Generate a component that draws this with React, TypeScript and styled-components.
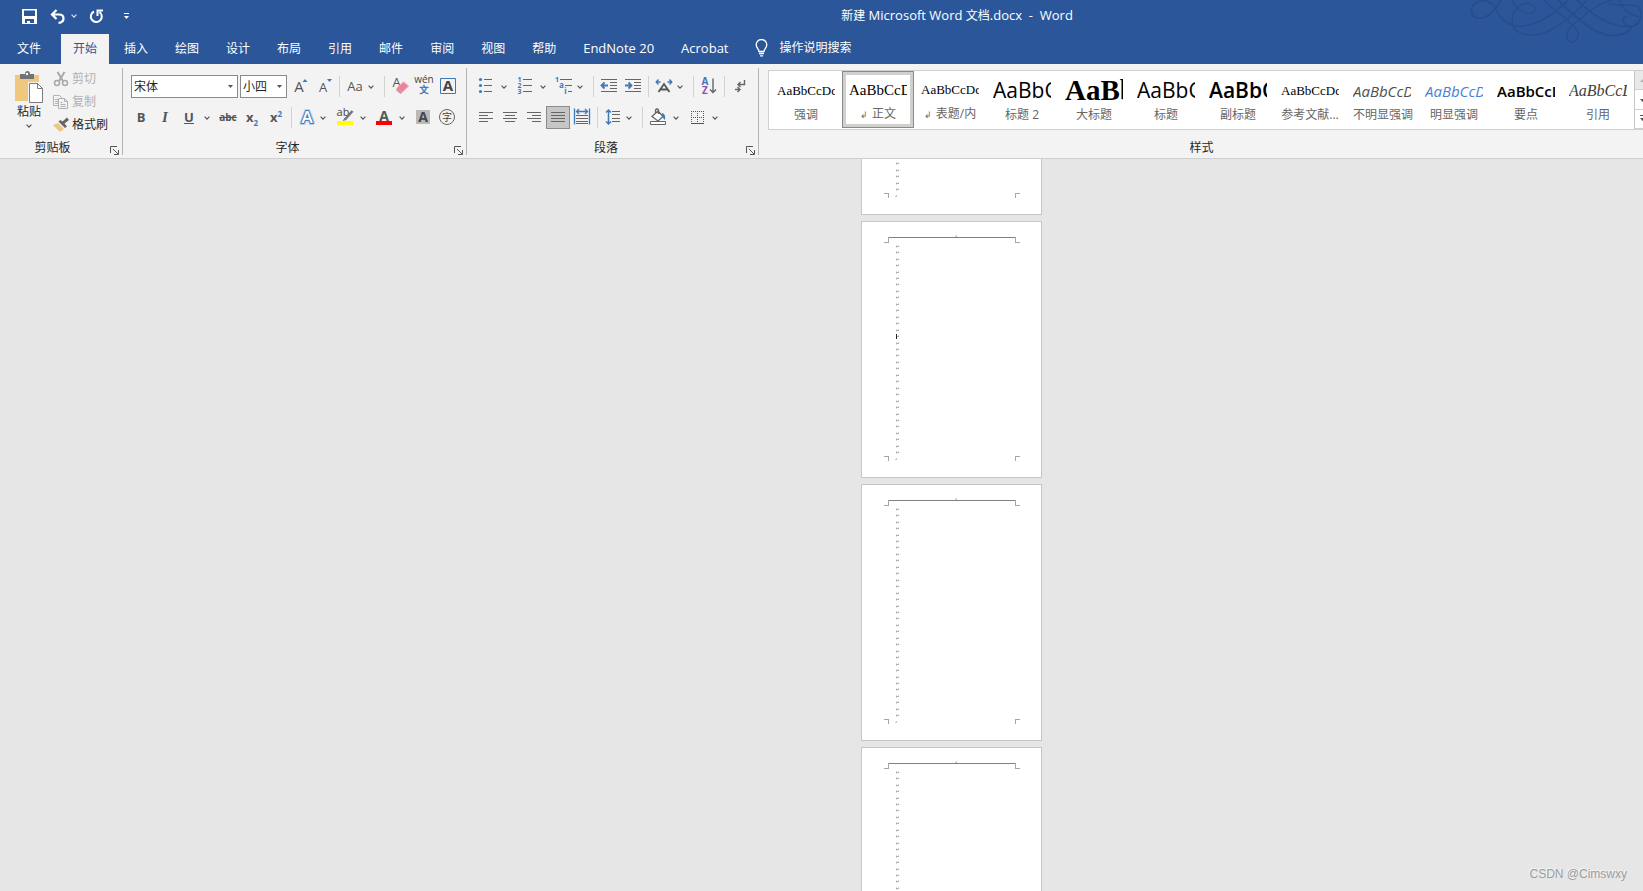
import React from "react";
import styled, { createGlobalStyle, css } from "styled-components";

const ui = `"Open Sans", "Noto Sans CJK SC", sans-serif`;
const blue = "#2b579a";
const accent = "#3f7ab8";
const ink = "#666666";

const GlobalStyle = createGlobalStyle`
  * { box-sizing: border-box; }
  body { margin: 0; background: #e6e6e6; font: 12px/16px ${ui}; color: #262626; overflow: hidden; }
  button { font: inherit; color: inherit; background: none; border: 0; padding: 0; }
  select { font: inherit; }
`;

const Window = styled.div`
  display: flex;
  flex-direction: column;
  height: 100vh;
  overflow: hidden;
  position: relative;
`;

/* ---------- title bar and tabs ---------- */

const Header = styled.header`
  position: relative;
  background: ${blue};
  color: #ffffff;
`;

const TitleBar = styled.div`
  display: grid;
  grid-template-columns: 51.2% auto;
  align-items: center;
  height: 34px;
  padding-bottom: 2px;
`;

const QuickAccess = styled.div`
  display: flex;
  align-items: center;
  padding-left: 20px;
`;

const QuickButton = styled.button<{ $w: number; $before?: number }>`
  display: flex;
  align-items: center;
  justify-content: center;
  width: ${(p) => p.$w}px;
  height: 24px;
  margin-left: ${(p) => p.$before ?? 0}px;
`;

const Title = styled.h1`
  margin: 0;
  padding-bottom: 1px;
  font-size: 13px;
  line-height: 18px;
  font-weight: 400;
  white-space: pre;
`;

const Cjk = styled.span`
  font-size: 12px;
`;

const Ornament = styled.svg`
  position: absolute;
  top: 0;
  right: 0;
  pointer-events: none;
`;

const TabBar = styled.nav`
  display: flex;
  gap: 3px;
  height: 30px;
  padding-left: 5px;
`;

const Tab = styled.button<{ $active?: boolean; $latin?: boolean; $file?: boolean }>`
  padding: 0 12px ${(p) => (p.$latin ? 2 : 0)}px;
  margin-right: ${(p) => (p.$file ? 5 : 0)}px;
  white-space: nowrap;
  font-size: ${(p) => (p.$latin ? 13 : 12)}px;
  line-height: 28px;
  ${(p) => p.$active && css`background: #f3f3f3; color: ${blue};`}
`;

const Tell = styled.button`
  display: flex;
  align-items: center;
  gap: 12px;
  margin-left: 11px;
  padding-bottom: 2px;
  white-space: nowrap;
`;

/* ---------- ribbon ---------- */

const Ribbon = styled.section`
  display: flex;
  padding: 4px 0 3px;
  background: #f3f3f3;
  border-bottom: 1px solid #cfcfcf;
`;

const Group = styled.section<{ $pad: string; $grow?: boolean }>`
  position: relative;
  display: flex;
  flex-direction: column;
  flex: ${(p) => (p.$grow ? "1 1 0" : "none")};
  min-width: 0;
  height: 87px;
  padding: ${(p) => p.$pad};
  border-right: ${(p) => (p.$grow ? "0" : "1px solid #b5b5b5")};
`;

const GroupLabel = styled.h2<{ $right?: number }>`
  margin: auto 0 0;
  padding-right: ${(p) => p.$right ?? 14}px;
  font-size: 12px;
  line-height: 14px;
  font-weight: 400;
  text-align: center;
`;

const Launcher = styled.button`
  position: absolute;
  right: 3px;
  bottom: 0;
  width: 9px;
  height: 9px;
  display: flex;
`;

const Row = styled.div`
  display: flex;
  height: 23px;
  margin-bottom: 8px;
`;

const Cell = styled.button<{ $w?: number; $pressed?: boolean }>`
  display: flex;
  align-items: center;
  justify-content: center;
  width: ${(p) => p.$w ?? 24}px;
  height: 23px;
  color: #555555;
  ${(p) => p.$pressed && css`
    background: #c6c6c6;
    box-shadow: inset 0 0 0 1px #8c8c8c;
  `}
`;

const Split = styled.span<{ $narrow?: boolean }>`
  display: flex;
  margin: ${(p) => (p.$narrow ? "0 4px 0 2px" : "0 3px 0 0")};
`;

const Sep = styled.span`
  width: 1px;
  height: 21px;
  margin: 1px 3px 0;
  background: #d2d2d2;
`;

const Combo = styled.span<{ $w: number }>`
  position: relative;
  width: ${(p) => p.$w}px;
  margin-left: 2px;
  margin-right: ${(p) => (p.$w < 60 ? 1 : 0)}px;
  select {
    appearance: none;
    width: 100%;
    height: 23px;
    padding: 0 0 0 2px;
    border: 1px solid #8a8a8a;
    border-radius: 0;
    background: #ffffff;
    color: #262626;
  }
  svg {
    position: absolute;
    right: 4px;
    top: 7px;
    pointer-events: none;
  }
`;

const Glyph = styled.span<{ $size?: number; $bold?: boolean; $italic?: boolean; $line?: string }>`
  padding-bottom: 2px;
  font-size: ${(p) => p.$size ?? 13}px;
  line-height: 20px;
  font-weight: ${(p) => (p.$bold ? 700 : 400)};
  ${(p) => p.$italic && css`font-family: "Liberation Serif", serif; font-style: italic;`}
  text-decoration: ${(p) => p.$line ?? "none"};
  sub, sup { font-size: 8px; line-height: 0; color: ${accent}; }
`;

const Clipboard = styled.div`
  display: flex;
`;

const Paste = styled.button`
  display: flex;
  flex-direction: column;
  align-items: center;
  width: 36px;
  padding-top: 3px;
  gap: 1px;
  > span { margin-bottom: 3px; }
`;

const ClipList = styled.div`
  display: flex;
  flex-direction: column;
  gap: 2px;
  margin-left: 6px;
`;

const ClipButton = styled.button`
  display: flex;
  align-items: center;
  gap: 3px;
  height: 21px;
  white-space: nowrap;
  &:disabled { color: #b1b1b1; }
`;

/* ---------- style gallery ---------- */

const Gallery = styled.div`
  display: flex;
  height: 60px;
  overflow: hidden;
  background: #ffffff;
  border: 1px solid #d0d0d0;
  border-right: 0;
  padding-left: 1px;
`;

const StyleItem = styled.button<{ $selected?: boolean }>`
  flex: none;
  width: 72px;
  height: 57px;
  padding: 0 7px 4px;
  color: #666666;
  text-align: center;
  ${(p) => p.$selected && css`
    box-shadow: inset 0 0 0 1px #8a8a86, inset 0 0 0 4px #d0d0cd;
  `}
`;

const Sample = styled.span<{ $face: "serif" | "sans"; $size: number; $bold?: boolean; $italic?: boolean; $color?: string }>`
  display: block;
  width: 58px;
  height: 34px;
  padding-top: 3px;
  overflow: hidden;
  white-space: nowrap;
  text-align: left;
  font-family: ${(p) => (p.$face === "serif" ? `"Liberation Serif", serif` : `"Open Sans", sans-serif`)};
  font-size: ${(p) => p.$size}px;
  line-height: ${(p) => (p.$size > 18 ? 30 : 32)}px;
  font-weight: ${(p) => (p.$bold ? (p.$face === "serif" ? 700 : 600) : 400)};
  font-style: ${(p) => (p.$italic ? "italic" : "normal")};
  color: ${(p) => p.$color ?? "#000000"};
`;

const StyleName = styled.span`
  display: block;
  line-height: 18px;
  white-space: nowrap;
  small { font-size: 9px; margin-right: 4px; }
`;

const GalleryScroll = styled.div`
  display: flex;
  flex: 1 0 17px;
  flex-direction: column;
  border-left: 1px solid #c6c6c6;
  button {
    flex: 1;
    padding-left: 4px;
    display: flex;
    align-items: center;
    border-bottom: 1px solid #d0d0d0;
  }
  button:disabled { background: #e8e8e8; }
`;

/* ---------- document ---------- */

const Canvas = styled.main`
  flex: 1;
  min-height: 0;
  overflow: hidden;
  display: flex;
  flex-direction: column;
  align-items: flex-start;
  gap: 6px;
  padding-left: 52.4%;
`;

const ScrolledPage = styled.div`
  flex: none;
  display: flex;
  flex-direction: column;
  justify-content: flex-end;
  height: 56px;
  overflow: hidden;
`;

const Sheet = styled.article`
  flex: none;
  width: 181px;
  height: 257px;
  padding: 15px 21px 0 22px;
  background: #ffffff;
  border: 1px solid #c6c6c6;
`;

const Margin = styled.div`
  display: flex;
  justify-content: space-between;
`;

const Corner = styled.span<{ $top?: boolean; $right?: boolean }>`
  width: 5px;
  height: ${(p) => (p.$top ? 6 : 5)}px;
  border: 0 solid #a6a6a6;
  border-top-width: ${(p) => (p.$top ? 0 : 1)}px;
  border-bottom-width: ${(p) => (p.$top ? 1 : 0)}px;
  border-left-width: ${(p) => (p.$right ? 1 : 0)}px;
  border-right-width: ${(p) => (p.$right ? 0 : 1)}px;
`;

const HeadRule = styled.span`
  flex: 1;
  display: flex;
  justify-content: center;
  margin-right: -1px;
  border-top: 1px solid #808080;
  svg { margin: -3px 0 0 8px; }
`;

const FootMark = styled.span`
  flex: 1;
  display: flex;
  align-items: flex-end;
  padding-left: 6px;
`;

const Body = styled.div`
  display: flex;
  flex-direction: column;
  height: 213px;
  padding-left: 12px;
`;

const Paragraph = styled.p`
  flex: 1;
  display: flex;
  align-items: center;
  min-height: 0;
  margin: 0;
`;

const Watermark = styled.div`
  position: absolute;
  right: 16px;
  bottom: 9px;
  font: 12px/16px "Liberation Sans", sans-serif;
  color: #9c9c9c;
  text-shadow: -1px -1px 0 #f6f6f6;
`;

/* ---------- icons ---------- */

const IconSvg = styled.svg`
  flex: none;
  overflow: visible;
`;

type IconProps = { children: React.ReactNode; w?: number };

const Icon = ({ children, w = 24 }: IconProps) => (
  <IconSvg width={w} height={23} viewBox={`${(24 - w) / 2} 0 ${w} 23`} fill="none" stroke={ink} aria-hidden="true">
    {children}
  </IconSvg>
);

const Chevron = ({ color = "#555555" }: { color?: string }) => (
  <svg width="6" height="4" viewBox="0 0 6 4" fill="none" stroke={color} strokeWidth="1.2" aria-hidden="true">
    <path d="M.6 .7 3 3.1 5.4 .7" />
  </svg>
);

const Triangle = ({ up, bar, color = "#555555" }: { up?: boolean; bar?: boolean; color?: string }) => (
  <svg width="7" height="7" viewBox="0 0 7 7" fill={color} aria-hidden="true">
    {bar && <path d="M1 0h5v1H1z" />}
    <path d={up ? "M1 5h5L3.500 2z" : "M1 3h5L3.500 6z"} />
  </svg>
);

const T = ({ x, y, s, fill = "#555", b, children }: { x: number; y: number; s: number; fill?: string; b?: boolean; children: string }) => (
  <text x={x} y={y} fontSize={s} fill={fill} stroke="none" fontWeight={b ? 700 : 400} textAnchor="middle">
    {children}
  </text>
);

const Drop = ({ label }: { label: string }) => (
  <Cell $w={12} aria-label={label}><Chevron /></Cell>
);

const lines = (rows: [number, number, number][]) => rows.map(([x1, x2, y]) => `M${x1} ${y}H${x2}`).join("");

const icons = {
  bullets: <Icon><g fill={accent} stroke="none"><circle cx="6.5" cy="4.500" r="1.600" /><circle cx="6.500" cy="10.500" r="1.600" /><circle cx="6.500" cy="16.500" r="1.600" /></g><path d={lines([[10, 18, 4.5], [10, 18, 10.5], [10, 18, 16.5]])} /></Icon>,
  numbers: <Icon><path d={lines([[10, 19, 4.5], [10, 19, 10.5], [10, 19, 16.5]])} /><T x={6.5} y={7} s={7} fill={accent} b>1</T><T x={6.5} y={13} s={7} fill={accent} b>2</T><T x={6.5} y={19} s={7} fill={accent} b>3</T></Icon>,
  levels: <Icon w={20}><path d={lines([[8, 20, 4.5], [13, 20, 10.5], [16, 20, 16.5]])} /><T x={5} y={7} s={7} fill={accent} b>1</T><T x={9.5} y={13} s={8} fill={accent} b>a</T><T x={13.5} y={19} s={8} fill={accent} b>i</T></Icon>,
  outdent: <Icon><path d={lines([[4, 20, 4.5], [13, 20, 7.5], [13, 20, 10.5], [13, 20, 13.5], [4, 20, 16.5]])} /><path d="M11 10.500H5M7.500 7.500l-3 3 3 3" stroke={accent} strokeWidth="1.800" /></Icon>,
  indent: <Icon><path d={lines([[4, 20, 4.5], [13, 20, 7.5], [13, 20, 10.5], [13, 20, 13.5], [4, 20, 16.5]])} /><path d="M4 10.500h6M7.500 7.500l3 3-3 3" stroke={accent} strokeWidth="1.800" /></Icon>,
  asian: <Icon w={20}><path d="M6.500 17 12 9l5.500 8M8.500 14.500h7" strokeWidth="1.800" stroke="#555" /><path d="M4.500 7h4M6.500 4.500 4.200 7l2.300 2.500M19.500 7h-4M17.500 4.500 19.800 7l-2.300 2.500" stroke={accent} strokeWidth="1.400" /></Icon>,
  sort: <Icon><T x={8} y={10} s={10} fill={accent} b>A</T><T x={8} y={19} s={10} fill="#8d52ae" b>Z</T><path d="M16 3.500v14M13 14.500l3 3 3-3" strokeWidth="1.400" /></Icon>,
  marks: <Icon><path d="M16.500 5v4.500H10M12.500 7 10 9.500l2.500 2.500M7 14.500h5M9.500 12l2.500 2.500L9.500 17" strokeWidth="1.400" /></Icon>,
  left: <Icon><path d={lines([[5, 19, 6.5], [5, 14, 9.5], [5, 19, 12.5], [5, 14, 15.5]])} /></Icon>,
  center: <Icon><path d={lines([[5, 19, 6.5], [7, 17, 9.5], [5, 19, 12.5], [7, 17, 15.5]])} /></Icon>,
  right: <Icon><path d={lines([[5, 19, 6.5], [10, 19, 9.5], [5, 19, 12.5], [10, 19, 15.5]])} /></Icon>,
  justify: <Icon w={22}><path d={lines([[5, 19, 6.5], [5, 19, 9.5], [5, 19, 12.5], [5, 19, 15.5]])} /></Icon>,
  distribute: <Icon><path d="M4.500 2.500v16M19.500 2.500v16M7 5.500h10M9 3 6.500 5.500 9 8M15 3l2.500 2.500L15 8" stroke={accent} strokeWidth="1.300" /><path d={lines([[6, 18, 9.5], [6, 18, 12.5], [6, 18, 15.5], [6, 18, 17.5]])} /></Icon>,
  spacing: <Icon w={20}><path d="M7.500 4v14M5 6.500 7.500 4 10 6.500M5 15.500 7.500 18l2.500-2.500" stroke={accent} strokeWidth="1.500" /><path d={lines([[11, 19, 5.5], [11, 19, 8.5], [11, 19, 12.5], [11, 19, 15.5]])} /></Icon>,
  shading: <Icon><path d="M6 10.500 12 5l5 5.500-5 4.500zM9.500 8V4q1.500-2 3 0v4" strokeWidth="1.300" fill="#fff" /><path d="M16 7q4 1 3 7-3-2-3-7" fill={accent} stroke="none" /><path d="M4.500 15.500h15v3h-15z" fill="#fff" /></Icon>,
  border: <Icon><path d="M6 5.500h13M6 11.500h13M6.500 5v12M12.500 5v12M18.500 5v12" strokeDasharray="1 1" stroke="#555" /><path d="M6 17.500h13" stroke="#555" /></Icon>,
  eraser: <Icon><T x={8.5} y={12} s={13}>A</T><path d="m9 13 6.500-6 5 4-6.500 6.500z" fill="#e8849c" stroke="#f0a3b5" /><path d="m9 13 5 4.500-1.500 1.500-4.500-4z" fill="#e8849c" stroke="none" /></Icon>,
  wen: <Icon><T x={12} y={8} s={10} fill="#444">wén</T><text x="12" y="18" fontSize="9" fill={accent} stroke={accent} strokeWidth=".5" textAnchor="middle">文</text></Icon>,
  boxed: <Icon><path d="M4.500 3.500h15v15h-15z" stroke={accent} /><T x={12} y={16} s={15} fill="#444" b>A</T></Icon>,
  glow: <Icon w={20}><g fontSize="17" fontWeight="600" textAnchor="middle" strokeLinejoin="round" paintOrder="stroke"><text x="12" y="17" fill="#a9c8ea" stroke="#b4d0ee" strokeWidth="4">A</text><text x="12" y="17" fill="#fff" stroke={accent} strokeWidth="2">A</text></g></Icon>,
  highlight: <Icon><T x={10} y={10} s={11} fill="#444">ab</T><path d="M19.500 5 12 13.500" strokeWidth="2.600" stroke="#777" /><path d="m11.500 12 2 2-4 1z" fill="#777" stroke="none" /><path d="M4 15h16v4H4z" fill="#ffff00" stroke="none" /></Icon>,
  color: <Icon><T x={12} y={14.5} s={14} b>A</T><path d="M4 15h16v4H4z" fill="#ff0000" stroke="none" /></Icon>,
  shaded: <Icon><path d="M5 4h14v14H5z" fill="#b9b9b9" stroke="none" /><T x={12} y={16} s={14} fill="#444" b>A</T></Icon>,
  circled: <Icon><circle cx="12" cy="11" r="7.500" /><T x={12} y={15} s={10} fill="#444">字</T></Icon>,
  grow: <Icon><T x={11} y={17} s={15}>A</T><path d="m14.500 7 2.500-3 2.500 3z" fill={accent} stroke="none" /></Icon>,
  shrink: <Icon><T x={11} y={17} s={13}>A</T><path d="m15 4 2.500 3L20 4z" fill={accent} stroke="none" /></Icon>,
};

const PasteIcon = () => (
  <svg width="30" height="32" viewBox="0 0 30 32" aria-hidden="true">
    <path d="M1 4h24v26H1z" fill="#edc87e" />
    <path d="M6 3h5q0-3 2.500-3t2.500 3h4v5H6z" fill="#737373" /><circle cx="13" cy="3" r="1.200" fill="#fff" />
    <path d="M14 11h16v21H14z" fill="#f3f3f3" />
    <path d="M15.500 12.500h8l5 5v14h-13z" fill="#fff" stroke="#7a7a7a" /><path d="M23.500 12.500v5h5" fill="none" stroke="#7a7a7a" />
  </svg>
);
const CutIcon = () => (
  <svg width="16" height="16" viewBox="0 0 16 16" fill="none" stroke="#a9a9a9" strokeWidth="1.500" aria-hidden="true">
    <path d="M4.500 1 10 10M11.500 1 6 10" strokeWidth="2" /><circle cx="4" cy="12" r="2.500" /><circle cx="12" cy="12" r="2.500" />
  </svg>
);
const CopyIcon = () => (
  <svg width="16" height="16" viewBox="0 0 16 16" fill="#f3f3f3" stroke="#b1b1b1" aria-hidden="true">
    <path d="M.500 1.500h6l2 2v8h-8zM2 5.500h4M2 7.500h3M2 9.500h3" /><path d="M5.500 4.500h6l3 3v7h-9zM11.500 4.500v3h3M7.500 8.500h2M7.500 10.500h5M7.500 12.500h5" />
  </svg>
);
const BrushIcon = () => (
  <svg width="16" height="16" viewBox="0 0 16 16" aria-hidden="true">
    <path d="m0 8 5-2 6 6-4 3z" fill="#edc87e" /><path d="m5.500 4.500 6.500 6.500 2-1.500-2.500-3L16 3l-2-2.500-4.500 4-2-1.500z" fill="#666" />
  </svg>
);

const LauncherIcon = () => (
  <svg width="9" height="9" viewBox="0 0 9 9" fill="none" stroke="#555" aria-hidden="true">
    <path d="M.500 7V.500H7M3 3l5 5M8.500 4v4.500H4" />
  </svg>
);

const EndMark = () => (
  <svg width="2" height="3" viewBox="0 0 2 3" aria-hidden="true" shapeRendering="crispEdges">
    <path d="M0 1h1V0h1v2H0z" fill="#c8c8c8" />
  </svg>
);

const ParagraphMark = ({ caret }: { caret?: boolean }) => (
  <svg width="3" height="5" viewBox="0 0 3 5" aria-hidden="true" shapeRendering="crispEdges">
    <path d="M0 1h1v3H0zM2 1h1v1H2z" fill="#dadada" />
    <path d="M0 2h3v1H0z" fill="#b0b0b0" />
    {caret && <path d="M0 0h1v5H0z" fill="#222222" />}
  </svg>
);

/* ---------- content ---------- */

const tabs = ["插入", "绘图", "设计", "布局", "引用", "邮件", "审阅", "视图", "帮助", "EndNote 20", "Acrobat"];

type StyleDef = { name: string; face: "serif" | "sans"; size: number; bold?: boolean; italic?: boolean; color?: string; selected?: boolean; linked?: boolean };

const styleDefs: StyleDef[] = [
  { name: "强调", face: "serif", size: 13 },
  { name: "正文", face: "serif", size: 15, selected: true, linked: true },
  { name: "表题/内", face: "serif", size: 13, linked: true },
  { name: "标题 2", face: "sans", size: 21 },
  { name: "大标题", face: "serif", size: 29, bold: true },
  { name: "标题", face: "sans", size: 21 },
  { name: "副标题", face: "sans", size: 21, bold: true },
  { name: "参考文献...", face: "serif", size: 13 },
  { name: "不明显强调", face: "sans", size: 15, italic: true, color: "#505050" },
  { name: "明显强调", face: "sans", size: 15, italic: true, color: "#4a7fd4" },
  { name: "要点", face: "sans", size: 15, bold: true },
  { name: "引用", face: "serif", size: 16, italic: true, color: "#404040" },
];

const Page = ({ caret }: { caret?: number }) => (
  <Sheet>
    <Margin>
      <Corner $top />
      <HeadRule><EndMark /></HeadRule>
      <Corner $top $right />
    </Margin>
    <Body>
      {Array.from({ length: 33 }, (_, i) => (
        <Paragraph key={i}><ParagraphMark caret={i === caret} /></Paragraph>
      ))}
    </Body>
    <Margin>
      <Corner />
      <FootMark><EndMark /></FootMark>
      <Corner $right />
    </Margin>
  </Sheet>
);

export default function App() {
  return (
    <Window>
      <GlobalStyle />
      <Header>
        <Ornament width="178" height="48" viewBox="0 0 534 144" fill="none" stroke="#274d8a" strokeWidth="4" aria-hidden="true">
          <path d="M108 0C98 18 88 32 72 44 52 60 26 58 20 38 16 20 28 6 48 3 70 0 84 10 92 26 104 50 124 78 160 79 220 78 270 40 310 0" strokeWidth="5" />
          <path d="M142 0C150 30 190 48 206 36 216 24 204 10 184 10 156 12 138 40 142 76 152 104 200 112 240 98 290 78 340 30 366 0" />
          <path d="M238 0C270 36 330 70 339 98 342 120 326 130 314 124 298 114 304 90 326 72 360 44 400 10 440 0" />
          <path d="M280 0C320 40 370 90 420 104 460 112 496 98 500 78" strokeWidth="6" />
          <path d="M336 0C380 46 440 84 496 80 528 72 538 40 520 22 506 10 480 20 430 12" strokeWidth="5" />
          <path d="M464 0C470 26 490 44 524 50M488 54C478 46 470 58 478 70 488 84 508 82 522 68" />
        </Ornament>
        <TitleBar>
          <QuickAccess>
            <QuickButton $w={18} aria-label="保存">
              <svg width="15" height="15" viewBox="0 0 15 15" aria-hidden="true"><path fillRule="evenodd" d="M0 0h15v15H0zM2 1.500V7h11V1.500zM3 10v4h2v-2h3v2h4v-4z" fill="#fff" /></svg>
            </QuickButton>
            <QuickButton $w={18} $before={11} aria-label="撤消">
              <svg width="16" height="15" viewBox="0 0 16 15" fill="none" stroke="#fff" strokeWidth="2.200" aria-hidden="true"><path d="M2 5.500h7q4.500 0 4.500 4t-5 4.300M6.500 1 2 5.500 6.500 10" /></svg>
            </QuickButton>
            <QuickButton $w={12} $before={1} aria-label="撤消选项"><Chevron color="#dbe4f2" /></QuickButton>
            <QuickButton $w={18} $before={7} aria-label="重复">
              <svg width="15" height="15" viewBox="0 0 15 15" fill="none" stroke="#fff" strokeWidth="2" aria-hidden="true"><path d="M5 2.500A5.500 5.500 0 1 0 10.500 3M8.500 7V1.500H14" /></svg>
            </QuickButton>
            <QuickButton $w={12} $before={15} aria-label="自定义快速访问工具栏"><Triangle bar color="#fff" /></QuickButton>
          </QuickAccess>
          <Title><Cjk>新建</Cjk> Microsoft Word <Cjk>文档</Cjk>.docx{"  -  "}Word</Title>
        </TitleBar>
        <TabBar>
          <Tab $file>文件</Tab>
          <Tab $active>开始</Tab>
          {tabs.map((t) => <Tab key={t} $latin={/^[A-Z]/.test(t)}>{t}</Tab>)}
          <Tell>
            <svg width="13" height="18" viewBox="0 0 13 18" fill="none" stroke="#fff" strokeWidth="1.300" aria-hidden="true"><path d="M4 12.500C4 10 1.200 9 1.200 5.800a5.300 5.300 0 0 1 10.600 0C11.800 9 9 10 9 12.500zM4 14.500h5M5 16.800h3" /></svg>
            操作说明搜索
          </Tell>
        </TabBar>
      </Header>

      <Ribbon>
        <Group $pad="0 14px 0 11px">
          <Clipboard>
            <Paste><PasteIcon /><span>粘贴</span><Chevron /></Paste>
            <ClipList>
              <ClipButton disabled><CutIcon />剪切</ClipButton>
              <ClipButton disabled><CopyIcon />复制</ClipButton>
              <ClipButton><BrushIcon />格式刷</ClipButton>
            </ClipList>
          </Clipboard>
          <GroupLabel>剪贴板</GroupLabel>
          <Launcher aria-label="剪贴板选项"><LauncherIcon /></Launcher>
        </Group>

        <Group $pad="7px 6px 0">
          <Row>
            <Combo $w={107}><select aria-label="字体"><option>宋体</option></select><Triangle /></Combo>
            <Combo $w={47}><select aria-label="字号"><option>小四</option></select><Triangle /></Combo>
            <Cell aria-label="增大字号">{icons.grow}</Cell>
            <Cell aria-label="减小字号">{icons.shrink}</Cell>
            <Sep />
            <Split $narrow><Cell $w={20} aria-label="更改大小写"><Glyph>Aa</Glyph></Cell><Drop label="大小写选项" /></Split>
            <Sep />
            <Cell aria-label="清除格式">{icons.eraser}</Cell>
            <Cell aria-label="拼音指南">{icons.wen}</Cell>
            <Cell aria-label="字符边框">{icons.boxed}</Cell>
          </Row>
          <Row>
            <Cell aria-label="加粗"><Glyph $bold>B</Glyph></Cell>
            <Cell aria-label="倾斜"><Glyph $size={15} $bold $italic>I</Glyph></Cell>
            <Split><Cell aria-label="下划线"><Glyph $bold $line="underline">U</Glyph></Cell><Drop label="下划线选项" /></Split>
            <Cell aria-label="删除线"><Glyph $size={10} $bold $line="line-through">abc</Glyph></Cell>
            <Cell aria-label="下标"><Glyph $bold>x<sub>2</sub></Glyph></Cell>
            <Cell aria-label="上标"><Glyph $bold>x<sup>2</sup></Glyph></Cell>
            <Sep />
            <Split $narrow><Cell $w={20} aria-label="文本效果">{icons.glow}</Cell><Drop label="文本效果选项" /></Split>
            <Split><Cell aria-label="突出显示">{icons.highlight}</Cell><Drop label="突出显示颜色" /></Split>
            <Split><Cell aria-label="字体颜色">{icons.color}</Cell><Drop label="字体颜色选项" /></Split>
            <Cell aria-label="字符底纹">{icons.shaded}</Cell>
            <Cell aria-label="带圈字符">{icons.circled}</Cell>
          </Row>
          <GroupLabel>字体</GroupLabel>
          <Launcher aria-label="字体选项"><LauncherIcon /></Launcher>
        </Group>

        <Group $pad="7px 6px 0 7px">
          <Row>
            <Split><Cell aria-label="项目符号">{icons.bullets}</Cell><Drop label="项目符号选项" /></Split>
            <Split><Cell aria-label="编号">{icons.numbers}</Cell><Drop label="编号选项" /></Split>
            <Split $narrow><Cell $w={20} aria-label="多级列表">{icons.levels}</Cell><Drop label="多级列表选项" /></Split>
            <Sep />
            <Cell aria-label="减少缩进量">{icons.outdent}</Cell>
            <Cell aria-label="增加缩进量">{icons.indent}</Cell>
            <Sep />
            <Split $narrow><Cell $w={20} aria-label="中文版式">{icons.asian}</Cell><Drop label="中文版式选项" /></Split>
            <Sep />
            <Cell aria-label="排序">{icons.sort}</Cell>
            <Sep />
            <Cell aria-label="显示编辑标记">{icons.marks}</Cell>
          </Row>
          <Row>
            <Cell aria-label="左对齐">{icons.left}</Cell>
            <Cell aria-label="居中">{icons.center}</Cell>
            <Cell aria-label="右对齐">{icons.right}</Cell>
            <Cell $pressed aria-label="两端对齐" aria-pressed="true">{icons.justify}</Cell>
            <Cell aria-label="分散对齐">{icons.distribute}</Cell>
            <Sep />
            <Split $narrow><Cell $w={20} aria-label="行距">{icons.spacing}</Cell><Drop label="行距选项" /></Split>
            <Sep />
            <Split><Cell aria-label="底纹">{icons.shading}</Cell><Drop label="底纹选项" /></Split>
            <Split><Cell aria-label="边框">{icons.border}</Cell><Drop label="边框选项" /></Split>
          </Row>
          <GroupLabel>段落</GroupLabel>
          <Launcher aria-label="段落选项"><LauncherIcon /></Launcher>
        </Group>

        <Group $grow $pad="2px 0 0 9px">
          <Gallery>
            {styleDefs.map((s) => (
              <StyleItem key={s.name} $selected={s.selected}>
                <Sample $face={s.face} $size={s.size} $bold={s.bold} $italic={s.italic} $color={s.color}>AaBbCcDd</Sample>
                <StyleName>{s.linked && <small>↲</small>}{s.name}</StyleName>
              </StyleItem>
            ))}
            <GalleryScroll>
              <button disabled aria-label="上一行"><Triangle up color="#b5b5b5" /></button>
              <button aria-label="下一行"><Triangle /></button>
              <button aria-label="更多样式"><Triangle bar /></button>
            </GalleryScroll>
          </Gallery>
          <GroupLabel $right={8}>样式</GroupLabel>
        </Group>
      </Ribbon>

      <Canvas>
        <ScrolledPage><Page /></ScrolledPage>
        <Page caret={14} />
        <Page />
        <Page />
      </Canvas>
      <Watermark>CSDN @Cimswxy</Watermark>
    </Window>
  );
}
